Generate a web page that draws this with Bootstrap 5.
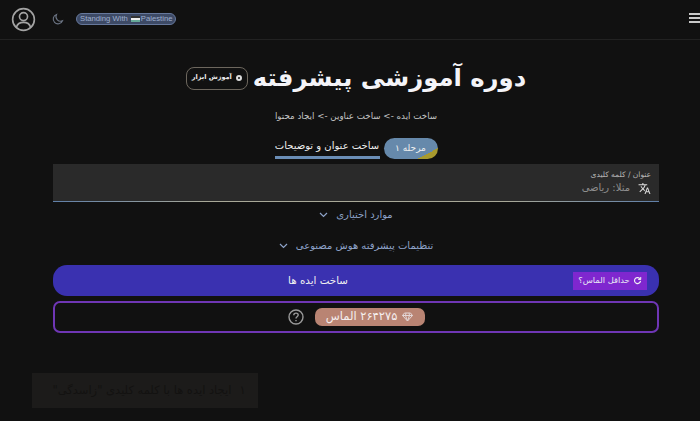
<!DOCTYPE html>
<html lang="fa">
<head>
    <meta charset="UTF-8">
    <meta name="viewport" content="width=device-width, initial-scale=1.0">
    <title>دوره آموزشی پیشرفته</title>
    <link href="https://cdn.jsdelivr.net/npm/bootstrap@5.3.0/dist/css/bootstrap.min.css" rel="stylesheet">
    <style>
        html, body {
            height: 421px;
            overflow: hidden;
        }

        body {
            background: #111111;
            color: #f1f1f4;
            font-family: "DejaVu Sans", sans-serif;
            position: relative;
        }

        .top-bar {
            height: 40px;
            border-bottom: 1px solid #222222;
            padding: 0 0 0 11px;
        }

        .top-left {
            margin-top: -1px;
        }

        .palestine-pill {
            height: 12px;
            padding: 0 3px;
            margin-left: 12px;
            border-radius: 6px;
            background: #3d4a66;
            border: 1px solid #66789c;
            color: #9fb0cf;
            font: 7.7px/10px "Liberation Sans", sans-serif;
        }

        .flag-mark {
            width: 9px;
            height: 6px;
            margin: 0 1px 0 3px;
            background: linear-gradient(#333 33%, #eee 33% 66%, #6a9 66%);
        }

        .burger {
            width: 11px;
            margin-top: -1px;
        }

        .burger span {
            display: block;
            height: 2px;
            background: #c9c9c9;
            margin-bottom: 2px;
        }

        .page-wrap {
            width: 606px;
            margin-left: 53px;
        }

        .title-row {
            height: 50px;
            margin-top: 13px;
            gap: 5px;
        }

        .title-row h1 {
            font-size: 24.3px;
            font-weight: 700;
            margin: 0;
            color: #f4f4f8;
            line-height: 50px;
        }

        .tool-pill {
            height: 23px;
            padding: 0 5px;
            border: 1px solid #6d675e;
            border-radius: 8px;
            font-size: 6.5px;
            font-weight: 700;
            color: #eeeeee;
        }

        .tool-dot {
            width: 6px;
            height: 6px;
            border: 2px solid #dddddd;
            border-radius: 50%;
        }

        .sub-line {
            font-size: 8.7px;
            color: #c4c4c4;
            margin-top: 6px;
            line-height: 14px;
        }

        .step-row {
            margin-top: 13px;
            height: 27px;
        }

        .step-pill {
            width: 54px;
            height: 21px;
            border-radius: 11px;
            margin-top: 2px;
            background: linear-gradient(152deg, #6689ab 78%, #a89a2e 78%);
            color: #f0f0f0;
            font-size: 9px;
        }

        .step-tab {
            width: 105px;
            height: 23px;
            padding-top: 2px;
            font-size: 10px;
            color: #eeeeee;
            border-bottom: 3px solid #6a8db5;
            line-height: 15px;
        }

        .keyword-box {
            height: 38px;
            margin-top: 1px;
            padding: 5px 8px 0;
            background: linear-gradient(to right, #5f7fa8, #a8a898 25%, #a8a898 75%, #5f7fa8) bottom / 100% 1px no-repeat, #2a2a2a;
        }

        .keyword-label {
            font-size: 7.5px;
            color: #b5b5b5;
            line-height: 11px;
        }

        .keyword-hint {
            font-size: 10px;
            color: #8f8f8f;
            line-height: 16px;
        }

        .fold-row {
            height: 31px;
            font-size: 10px;
            color: #8ea3c9;
        }

        .fold-first {
            margin-top: -3px;
        }

        .go-btn {
            height: 31px;
            margin-top: 4px;
            padding: 0 12px 0 0;
            background: #3a31b0;
            border-radius: 14px;
            color: #f0f0f0;
            font-size: 10.3px;
        }

        .min-tag {
            height: 18px;
            width: 74px;
            background: #7f27cf;
            color: #e8e8f4;
            font-size: 8.3px;
            gap: 3px;
        }

        .go-label {
            padding-left: 10px;
        }

        .balance-box {
            height: 32px;
            margin-top: 5px;
            border: 2px solid #6f36b5;
            border-radius: 7px;
            gap: 11px;
        }

        .balance-pill {
            width: 110px;
            height: 18px;
            background: #b98473;
            border-radius: 7px;
            color: #f5eeee;
            font-size: 11.5px;
            gap: 5px;
        }

        .toast-note {
            position: absolute;
            left: 32px;
            top: 373px;
            width: 226px;
            height: 35px;
            padding-left: 8px;
            background: #1c1b1a;
            color: #131211;
            font-size: 11.5px;
            gap: 8px;
        }
    </style>
</head>
<body>
    <!-- Top bar -->
    <div class="top-bar d-flex align-items-center justify-content-between">
        <div class="top-left d-flex align-items-center">
            <svg width="25" height="25" viewBox="0 0 26 26" fill="none" stroke="#a3a3a3" stroke-width="1.7">
                <circle cx="13" cy="13" r="11.3"/>
                <circle cx="13" cy="10" r="4.2"/>
                <path d="M5.6 21c1-3.4 3.6-5 7.4-5s6.4 1.6 7.4 5"/>
            </svg>
            <svg class="ms-3" width="12" height="12" viewBox="0 0 12 12" fill="none" stroke="#6d7686" stroke-width="1.1">
                <path d="M4.5 1.5a4.8 4.8 0 1 0 6 6.3a4.6 4.6 0 0 1-6-6.3z"/>
            </svg>
            <div class="palestine-pill d-flex align-items-center" dir="ltr">Standing With<span class="flag-mark"></span>Palestine</div>
        </div>
        <div class="burger"><span></span><span></span><span></span></div>
    </div>

    <div class="page-wrap" dir="rtl">
        <!-- Title -->
        <div class="title-row d-flex align-items-center justify-content-center">
            <h1>دوره آموزشی پیشرفته</h1>
            <div class="tool-pill d-flex align-items-center gap-1"><span class="tool-dot"></span>آموزش ابزار</div>
        </div>
        <div class="sub-line text-center">ساخت ایده -&gt; ساخت عناوین -&gt; ایجاد محتوا</div>

        <!-- Step -->
        <div class="step-row d-flex justify-content-center gap-1">
            <div class="step-pill d-flex align-items-center justify-content-center">مرحله ۱</div>
            <div class="step-tab text-center">ساخت عنوان و توضیحات</div>
        </div>

        <!-- Keyword -->
        <div class="keyword-box">
            <div class="keyword-label">عنوان / کلمه کلیدی</div>
            <div class="keyword-hint d-flex align-items-center gap-2">
                <svg width="13" height="13" viewBox="0 0 24 24" fill="#dddddd">
                    <path d="M12.87 15.07l-2.54-2.51.03-.03A17.5 17.5 0 0 0 14.07 6H17V4h-7V2H8v2H1v2h11.17C11.5 7.92 10.44 9.75 9 11.35 8.07 10.32 7.3 9.19 6.69 8h-2c.73 1.63 1.73 3.17 2.98 4.56l-5.09 5.02L4 19l5-5 3.11 3.11.76-2.04zM18.5 10h-2L12 22h2l1.12-3h4.75L21 22h2l-4.5-12zm-2.62 7l1.62-4.33L19.12 17h-3.24z"/>
                </svg>
                مثلا: ریاضی
            </div>
        </div>

        <!-- Collapsed sections -->
        <div class="fold-row fold-first d-flex align-items-center justify-content-center gap-2">
            موارد اختیاری
            <svg width="9" height="6" viewBox="0 0 9 6" fill="none" stroke="#8ea3c9" stroke-width="1.2"><path d="M1 1l3.5 3.5L8 1"/></svg>
        </div>
        <div class="fold-row d-flex align-items-center justify-content-center gap-2">
            تنظیمات پیشرفته هوش مصنوعی
            <svg width="9" height="6" viewBox="0 0 9 6" fill="none" stroke="#8ea3c9" stroke-width="1.2"><path d="M1 1l3.5 3.5L8 1"/></svg>
        </div>

        <!-- Generate -->
        <div class="go-btn d-flex align-items-center">
            <div class="min-tag d-flex align-items-center justify-content-center">
                <svg width="9" height="9" viewBox="0 0 12 12" fill="none" stroke="#f2f2f2" stroke-width="1.6">
                    <path d="M10 6.5a4 4 0 1 1-1.2-3.3L10 4.4"/>
                    <path d="M10.3 1.3v3.4H6.9" stroke-width="1.3"/>
                </svg>
                حداقل الماس؟
            </div>
            <span class="go-label flex-grow-1 text-center">ساخت ایده ها</span>
        </div>

        <!-- Balance -->
        <div class="balance-box d-flex align-items-center justify-content-center">
            <div class="balance-pill d-flex align-items-center justify-content-center">
                <svg width="11" height="10" viewBox="0 0 11 10" fill="none" stroke="#e3d6d6" stroke-width="1">
                    <path d="M2.5 1h6l2 2.5-5 5.5-5-5.500zM.5 3.5h10M4 1L3.5 3.5 5.5 9 7.5 3.5 7 1"/>
                </svg>
                ۲۶۴۲۷۵ الماس
            </div>
            <svg width="16" height="16" viewBox="0 0 16 16" fill="none" stroke="#9a9a9a" stroke-width="1.4">
                <circle cx="8" cy="8" r="7"/>
                <path d="M5.8 6.2c0-1.300 1-2.100 2.200-2.100s2.200.8 2.200 2c0 1.600-2.200 1.700-2.200 3.300"/>
                <path d="M8 11v1.3"/>
            </svg>
        </div>
    </div>

    <!-- Fading toast -->
    <div class="toast-note d-flex align-items-center justify-content-center" dir="rtl"><span>۱</span>ایجاد ایده ها با کلمه کلیدی "زاسدگی"</div>

    <script src="https://cdn.jsdelivr.net/npm/bootstrap@5.3.0/dist/js/bootstrap.bundle.min.js"></script>
</body>
</html>
